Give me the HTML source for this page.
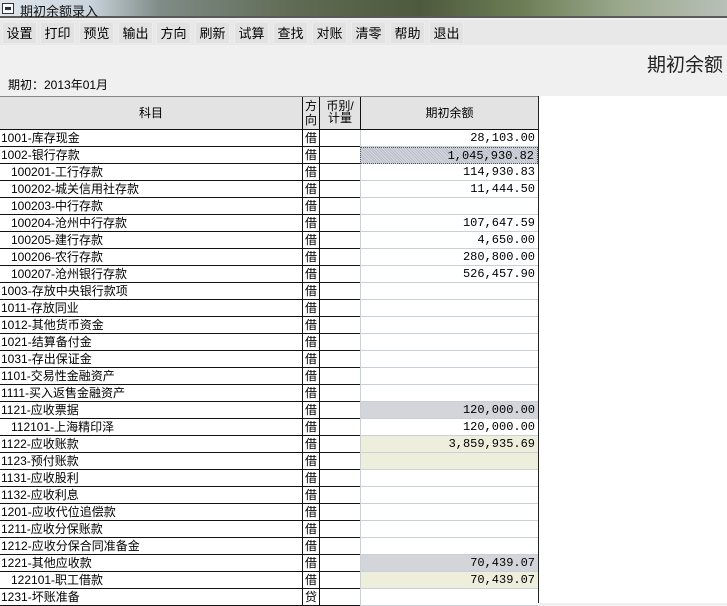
<!DOCTYPE html>
<html><head><meta charset="utf-8"><style>
*{margin:0;padding:0;box-sizing:border-box}
body{width:727px;height:603px;overflow:hidden;background:#f0f0f0;font-family:"Liberation Sans","Noto Sans CJK SC","WenQuanYi Zen Hei",sans-serif;font-size:12px;color:#000;position:relative}
.title{position:absolute;left:0;top:0;width:727px;height:18px;background:linear-gradient(90deg,#dfe6ee 0,#c9d3dc 90px,#7f8b86 160px,#5e6a52 300px,#4d5a3e 420px,#6c7d55 520px,#9aa88c 620px,#b8c0b8 727px);border-bottom:2px solid #5a5a5a}
.title .ic{position:absolute;left:2px;top:3px;width:12px;height:11px;border:1px solid #333;background:#fff}
.title .ic:after{content:"";position:absolute;left:2px;top:3px;width:6px;height:3px;background:#234}
.title span{position:absolute;left:20px;top:1px;font-size:13px;color:#111}
.tb{position:absolute;top:20px;left:0;width:727px;height:25px;background:#e8e8e8}
.tb div{position:absolute;top:2px;height:22px;width:35px;background:#e2e2e2;border:1px solid #ececec;font-size:13px;line-height:22px;text-align:center}
.big{position:absolute;right:4px;top:50px;font-size:19px;color:#222}
.per{position:absolute;left:8px;top:76px;font-size:12px}
.hdr{position:absolute;left:0;top:96px;width:538px;height:34px;background:#e3e3e3;border-top:1px solid #888;border-bottom:1px solid #111}
.wh{position:absolute;left:538px;top:96px;width:189px;height:507px;background:#fff;border-left:1px solid #222}
.hdr div{position:absolute;top:0;height:33px;text-align:center;font-size:12px}
.rows{position:absolute;left:0;top:130px;width:538px}
.r{position:relative;height:17px;border-bottom:1px solid #111;background:#fff}
.r div{position:absolute;top:0;height:16px;line-height:16px;font-size:12px}
.s{left:1px;width:300px}
.d{left:302px;width:18px;border-left:1px solid #111;border-right:1px solid #111;text-align:center;height:17px!important}
.c{left:320px;width:40px}
.b{left:360px;width:178px;border-left:1px solid #c8d0d8;text-align:right;padding-right:3px;font-family:"Liberation Mono","Noto Sans CJK SC",monospace;font-size:11px;height:17px!important;border-bottom:1px solid #c8d0d8;background:#fff}
.g{background:#d3d5db!important}.y{background:#eeeedc!important}
.sel{background:repeating-linear-gradient(45deg,#b8bcc6 0 1px,#d6d9e0 1px 2px)!important;border:1px dotted #555}
</style></head><body>
<div class="title"><div class="ic"></div><span>期初余额录入</span></div>
<div class="tb">
<div style="left:2px">设置</div><div style="left:40px">打印</div><div style="left:79px">预览</div><div style="left:118px">输出</div><div style="left:156px">方向</div><div style="left:195px">刷新</div><div style="left:234px">试算</div><div style="left:273px">查找</div><div style="left:312px">对账</div><div style="left:351px">清零</div><div style="left:390px">帮助</div><div style="left:429px">退出</div>
</div>
<div class="big">期初余额</div>
<div class="per">期初：2013年01月</div>
<div class="wh"></div>
<div class="hdr">
<div style="left:0;width:302px;line-height:33px">科目</div>
<div style="left:302px;width:18px;border-left:1px solid #111;border-right:1px solid #111;line-height:14px;padding-top:2px">方<br>向</div>
<div style="left:320px;width:40px;line-height:12px;padding-top:3px">币别/<br>计量</div>
<div style="left:360px;width:178px;border-left:1px solid #111;line-height:33px">期初余额</div>
</div>
<div class="rows">
<div class="r"><div class="s">1001-库存现金</div><div class="d">借</div><div class="c"></div><div class="b">28,103.00</div></div>
<div class="r"><div class="s">1002-银行存款</div><div class="d">借</div><div class="c"></div><div class="b sel">1,045,930.82</div></div>
<div class="r"><div class="s">&nbsp;&nbsp;&nbsp;100201-工行存款</div><div class="d">借</div><div class="c"></div><div class="b">114,930.83</div></div>
<div class="r"><div class="s">&nbsp;&nbsp;&nbsp;100202-城关信用社存款</div><div class="d">借</div><div class="c"></div><div class="b">11,444.50</div></div>
<div class="r"><div class="s">&nbsp;&nbsp;&nbsp;100203-中行存款</div><div class="d">借</div><div class="c"></div><div class="b"></div></div>
<div class="r"><div class="s">&nbsp;&nbsp;&nbsp;100204-沧州中行存款</div><div class="d">借</div><div class="c"></div><div class="b">107,647.59</div></div>
<div class="r"><div class="s">&nbsp;&nbsp;&nbsp;100205-建行存款</div><div class="d">借</div><div class="c"></div><div class="b">4,650.00</div></div>
<div class="r"><div class="s">&nbsp;&nbsp;&nbsp;100206-农行存款</div><div class="d">借</div><div class="c"></div><div class="b">280,800.00</div></div>
<div class="r"><div class="s">&nbsp;&nbsp;&nbsp;100207-沧州银行存款</div><div class="d">借</div><div class="c"></div><div class="b">526,457.90</div></div>
<div class="r"><div class="s">1003-存放中央银行款项</div><div class="d">借</div><div class="c"></div><div class="b"></div></div>
<div class="r"><div class="s">1011-存放同业</div><div class="d">借</div><div class="c"></div><div class="b"></div></div>
<div class="r"><div class="s">1012-其他货币资金</div><div class="d">借</div><div class="c"></div><div class="b"></div></div>
<div class="r"><div class="s">1021-结算备付金</div><div class="d">借</div><div class="c"></div><div class="b"></div></div>
<div class="r"><div class="s">1031-存出保证金</div><div class="d">借</div><div class="c"></div><div class="b"></div></div>
<div class="r"><div class="s">1101-交易性金融资产</div><div class="d">借</div><div class="c"></div><div class="b"></div></div>
<div class="r"><div class="s">1111-买入返售金融资产</div><div class="d">借</div><div class="c"></div><div class="b"></div></div>
<div class="r"><div class="s">1121-应收票据</div><div class="d">借</div><div class="c"></div><div class="b g">120,000.00</div></div>
<div class="r"><div class="s">&nbsp;&nbsp;&nbsp;112101-上海精印泽</div><div class="d">借</div><div class="c"></div><div class="b">120,000.00</div></div>
<div class="r"><div class="s">1122-应收账款</div><div class="d">借</div><div class="c"></div><div class="b y">3,859,935.69</div></div>
<div class="r"><div class="s">1123-预付账款</div><div class="d">借</div><div class="c"></div><div class="b y"></div></div>
<div class="r"><div class="s">1131-应收股利</div><div class="d">借</div><div class="c"></div><div class="b"></div></div>
<div class="r"><div class="s">1132-应收利息</div><div class="d">借</div><div class="c"></div><div class="b"></div></div>
<div class="r"><div class="s">1201-应收代位追偿款</div><div class="d">借</div><div class="c"></div><div class="b"></div></div>
<div class="r"><div class="s">1211-应收分保账款</div><div class="d">借</div><div class="c"></div><div class="b"></div></div>
<div class="r"><div class="s">1212-应收分保合同准备金</div><div class="d">借</div><div class="c"></div><div class="b"></div></div>
<div class="r"><div class="s">1221-其他应收款</div><div class="d">借</div><div class="c"></div><div class="b g">70,439.07</div></div>
<div class="r"><div class="s">&nbsp;&nbsp;&nbsp;122101-职工借款</div><div class="d">借</div><div class="c"></div><div class="b y">70,439.07</div></div>
<div class="r"><div class="s">1231-坏账准备</div><div class="d">贷</div><div class="c"></div><div class="b"></div></div>
</div>
</body></html>
